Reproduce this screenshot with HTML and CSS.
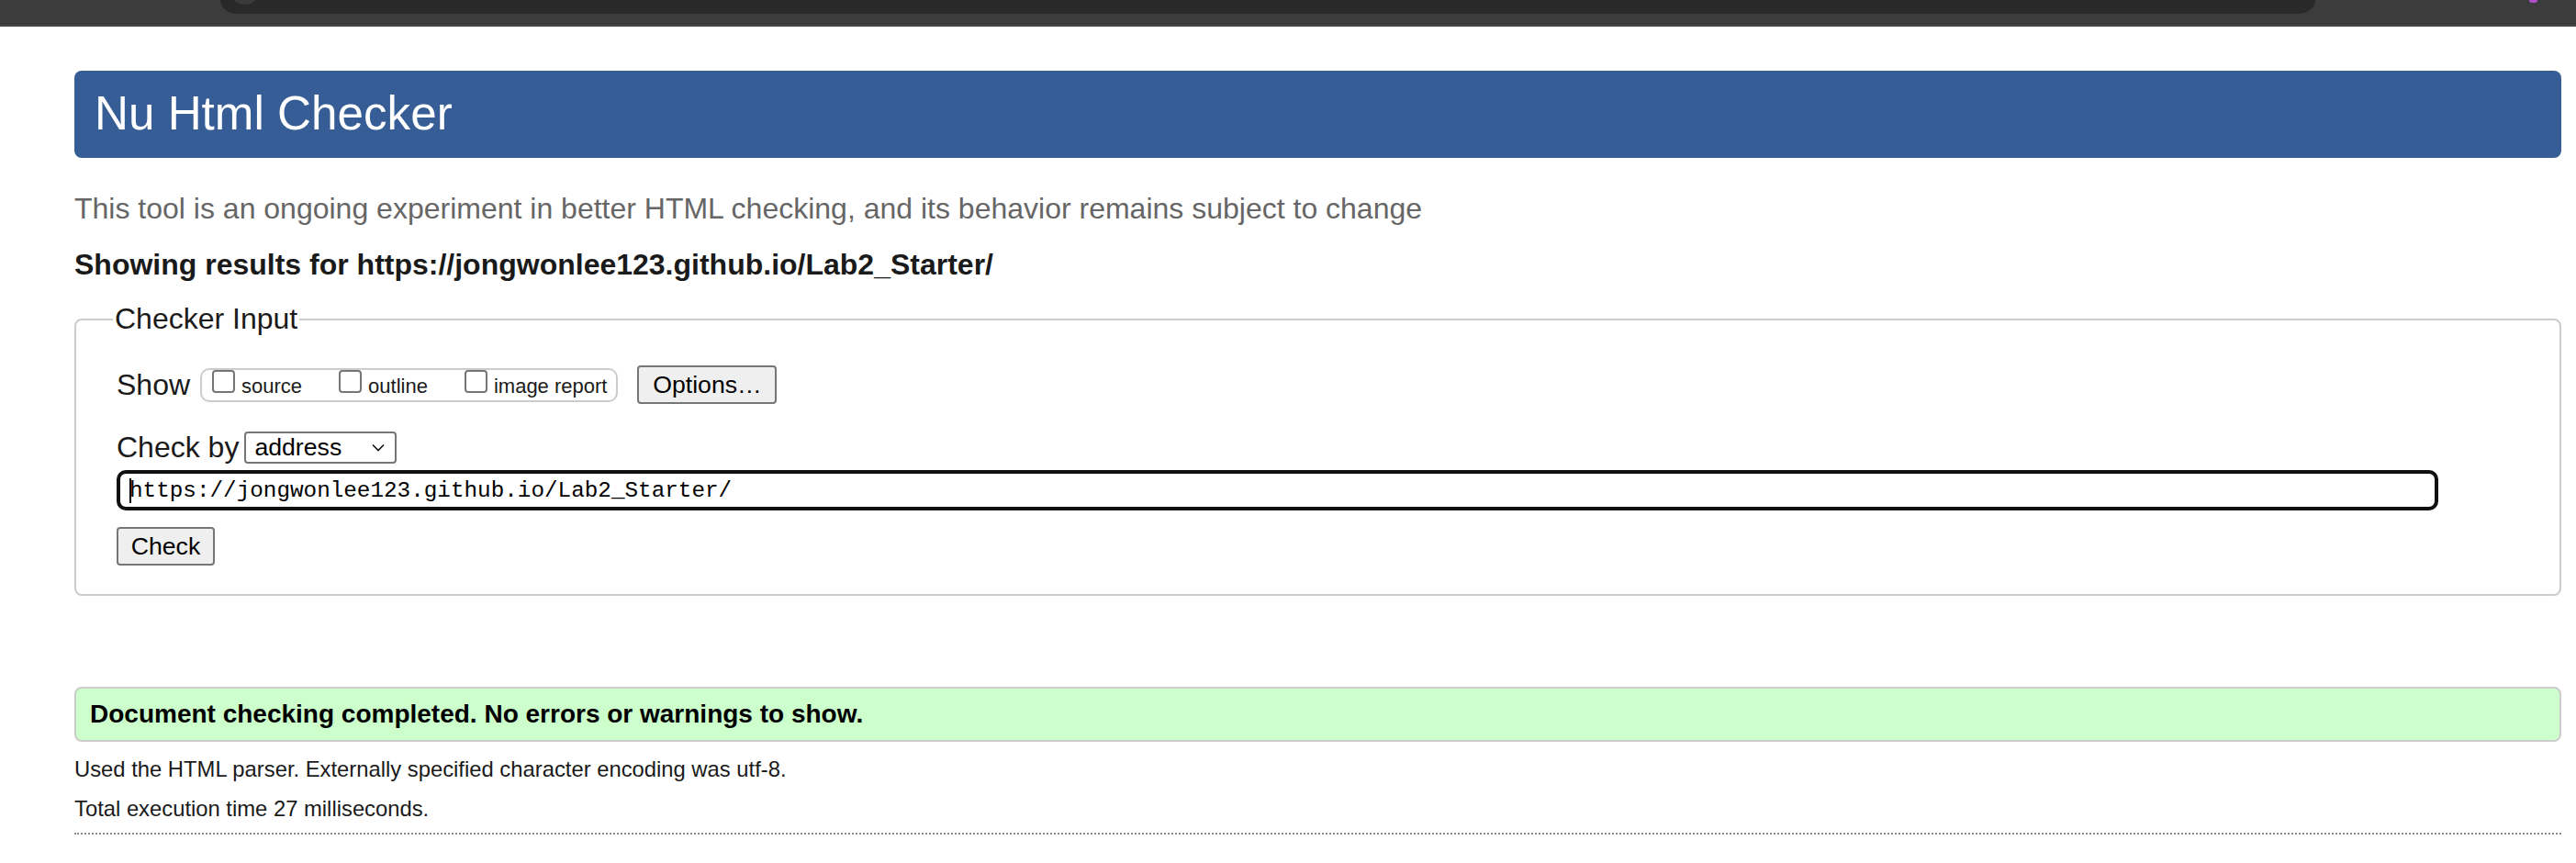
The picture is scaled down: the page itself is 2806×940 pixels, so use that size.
FILE: index.html
```html
<!DOCTYPE html>
<html lang="en">
<head>
<meta charset="utf-8">
<title>Nu Html Checker</title>
<link rel="stylesheet" href="styles.css">
</head>
<body>
<div class="topbar">
  <div class="pill"><span class="pill-icon"></span></div>
  <span class="dot"></span>
</div>
<div class="page">
  <h1 class="title">Nu Html Checker</h1>
  <p class="intro">This tool is an ongoing experiment in better HTML checking, and its behavior remains subject to change</p>
  <p class="results-for">Showing results for https://jongwonlee123.github.io/Lab2_Starter/</p>
  <form class="checker">
    <fieldset class="input-set">
      <legend class="legend">Checker Input</legend>
      <div class="row row-show">
        <span class="label">Show</span>
        <div class="options-box">
          <label class="opt"><input type="checkbox" class="cb"><span class="opt-text">source</span></label>
          <label class="opt"><input type="checkbox" class="cb"><span class="opt-text">outline</span></label>
          <label class="opt"><input type="checkbox" class="cb"><span class="opt-text">image report</span></label>
        </div>
        <button type="button" class="btn btn-options">Options…</button>
      </div>
      <div class="row row-by">
        <span class="label">Check by</span>
        <div class="select"><span>address</span>
          <svg class="chev" width="14" height="9" viewBox="0 0 14 9"><path d="M1 1.5 L7 7.5 L13 1.5" fill="none" stroke="#111" stroke-width="1.6"/></svg>
        </div>
      </div>
      <div class="row row-url">
        <div class="url"><span class="caret"></span>https://jongwonlee123.github.io/Lab2_Starter/</div>
      </div>
      <div class="row row-check">
        <button type="button" class="btn btn-check">Check</button>
      </div>
    </fieldset>
  </form>
  <div class="success">Document checking completed. No errors or warnings to show.</div>
  <p class="note note-first">Used the HTML parser. Externally specified character encoding was utf-8.</p>
  <p class="note">Total execution time 27 milliseconds.</p>
  <hr class="dotted">
</div>
</body>
</html>
```
FILE: styles.css
```css
html, body {
  margin: 0;
  padding: 0;
  background: #fff;
}
body {
  font-family: "Liberation Sans", Arial, sans-serif;
  color: #1a1a1a;
}
.topbar {
  height: 27px;
  background: #3c3c3c;
  border-bottom: 2px solid #474747;
  display: flex;
  align-items: flex-start;
}
.pill {
  margin-left: 240px;
  width: 2282px;
  height: 15px;
  background: #292929;
  border-radius: 0 0 18px 18px / 0 0 15px 15px;
  overflow: hidden;
  display: flex;
}
.pill-icon {
  width: 33px;
  height: 33px;
  margin: -28px 0 0 10px;
  border-radius: 50%;
  background: #3a3a3a;
}
.dot {
  margin-left: 233px;
  width: 9px;
  height: 3px;
  background: #b24fcf;
  border-radius: 0 0 5px 5px;
}
.page {
  margin: 48px 16px 0 81px;
}
.title {
  margin: 0;
  height: 95px;
  box-sizing: border-box;
  padding: 0 0 2px 22px;
  display: flex;
  align-items: center;
  background: #365d95;
  border-radius: 8px;
  color: #fff;
  font-size: 51.2px;
  font-weight: normal;
}
.intro {
  margin: 37px 0 0;
  font-size: 32px;
  line-height: 37px;
  color: #666;
}
.results-for {
  margin: 24px 0 0;
  font-size: 32px;
  line-height: 37px;
  font-weight: bold;
}
.checker {
  margin: 22px 0 0;
}
.input-set {
  margin: 0;
  border: 2px solid #ccc;
  border-radius: 8px;
  padding: 0 44px 31px 44px;
}
.legend {
  font-size: 32px;
  line-height: 37px;
  padding: 0 2px;
  margin-left: -4px;
}
.row {
  display: flex;
  align-items: center;
}
.label {
  font-size: 32px;
  line-height: 37px;
}
.row-show {
  margin-top: 32px;
  height: 42px;
}
.options-box {
  margin-left: 11px;
  height: 37px;
  box-sizing: border-box;
  border: 2px solid #ccc;
  border-radius: 10px;
  padding: 0 10px 0 11px;
  display: flex;
  align-items: flex-start;
}
.opt {
  display: flex;
  align-items: flex-end;
  margin-right: 40px;
}
.opt:last-child {
  margin-right: 0;
}
.cb {
  appearance: none;
  -webkit-appearance: none;
  width: 25px;
  height: 25px;
  margin: 0;
  box-sizing: border-box;
  border: 2px solid #767676;
  border-radius: 4px;
  background: #fff;
}
.opt-text {
  margin-left: 7px;
  font-size: 22px;
  line-height: 22px;
  margin-bottom: -4px;
}
.btn {
  font-family: "Liberation Sans", Arial, sans-serif;
  font-size: 26.67px;
  color: #000;
  background: #efefef;
  border: 2px solid #767676;
  border-radius: 4px;
  box-sizing: border-box;
  padding: 0;
  margin: 0;
}
.btn-options {
  margin-left: 21px;
  width: 152px;
  height: 42px;
}
.row-by {
  margin-top: 30px;
  height: 35px;
}
.select {
  margin-left: 6px;
  width: 166px;
  height: 35px;
  box-sizing: border-box;
  border: 2px solid #767676;
  border-radius: 4px;
  display: flex;
  align-items: center;
  justify-content: space-between;
  padding: 0 11px 0 9px;
  font-size: 26.67px;
  color: #000;
}
.row-url {
  margin-top: 7px;
}
.url {
  width: 2529px;
  height: 44px;
  box-sizing: border-box;
  border: 4px solid #101010;
  border-radius: 10px;
  display: flex;
  align-items: center;
  padding-left: 10px;
  font-family: "Liberation Mono", "DejaVu Sans Mono", monospace;
  font-size: 24.3px;
  color: #000;
  white-space: pre;
}
.caret {
  width: 2px;
  height: 27px;
  background: #000;
  margin-right: -2px;
}
.row-check {
  margin-top: 18px;
}
.btn-check {
  width: 107px;
  height: 42px;
}
.success {
  margin-top: 99px;
  height: 60px;
  box-sizing: border-box;
  border: 2px solid #ccc;
  border-radius: 8px;
  background: #ccffcc;
  display: flex;
  align-items: center;
  padding-left: 15px;
  font-size: 28px;
  font-weight: bold;
  color: #000;
}
.note {
  margin: 0;
  font-size: 23.8px;
  line-height: 27px;
}
.note-first {
  margin-top: 16px;
}
.note + .note {
  margin-top: 16px;
}
.dotted {
  margin: 13px 0 0;
  border: 0;
  border-top: 2px dotted #8a8a8a;
  height: 0;
}
```
